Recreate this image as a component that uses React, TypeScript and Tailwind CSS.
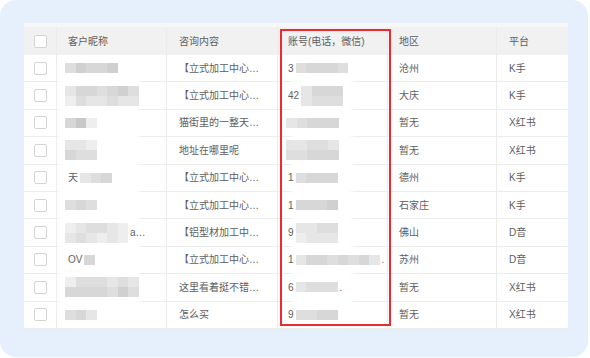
import { memo } from 'react';

type Row = {
    nick: { pre?: string; tiles: string[]; post?: string };
    content: string;
    account: { pre?: string; tiles: string[]; post?: string };
    region: string;
    platform: string;
};

// mosaic tile greys, keyed by letter so patterns stay short
const shade: Record<string, string> = {
    a: 'bg-[#eeeeee]',
    b: 'bg-[#e6e6e6]',
    c: 'bg-[#dedede]',
    d: 'bg-[#d7d7d7]',
    e: 'bg-[#d0d0d0]',
    f: 'bg-[#c8c8c8]',
};

const rows: Row[] = [
    { nick: { tiles: ['cedde'] }, content: '【立式加工中心…', account: { pre: '3', tiles: ['cdddc'] }, region: '沧州', platform: 'K手' },
    { nick: { tiles: ['bddcdec', 'acbbcbb'] }, content: '【立式加工中心…', account: { pre: '42', tiles: ['bddd', 'bccc'] }, region: '大庆', platform: 'K手' },
    { nick: { tiles: ['dfa'] }, content: '猫街里的一整天…', account: { tiles: ['bcddd'] }, region: '暂无', platform: 'X红书' },
    { nick: { tiles: ['bba', 'dcc'] }, content: '地址在哪里呢', account: { tiles: ['bbccb', 'ccddd'] }, region: '暂无', platform: 'X红书' },
    { nick: { pre: '天', tiles: ['bcd'] }, content: '【立式加工中心…', account: { pre: '1', tiles: ['cddd'] }, region: '德州', platform: 'K手' },
    { nick: { tiles: ['cdc'] }, content: '【立式加工中心…', account: { pre: '1', tiles: ['ddde'] }, region: '石家庄', platform: 'K手' },
    { nick: { tiles: ['abccba', 'bcbaba'], post: 'a…' }, content: '【铝型材加工中…', account: { pre: '9', tiles: ['bbcc', 'abbb'] }, region: '佛山', platform: 'D音' },
    { nick: { pre: 'OV', tiles: ['d'] }, content: '【立式加工中心…', account: { pre: '1', tiles: ['bddcdcdb'], post: '.' }, region: '苏州', platform: 'D音' },
    { nick: { tiles: ['acccbcb', 'ddddcec'] }, content: '这里看着挺不错…', account: { pre: '6', tiles: ['bccc'], post: '.' }, region: '暂无', platform: 'X红书' },
    { nick: { tiles: ['cdb'] }, content: '怎么买', account: { pre: '9', tiles: ['ccdd'] }, region: '暂无', platform: 'X红书' },
];

const cols = 'grid grid-cols-[33px_110px_111px_110px_109px_71px]';

const Checkbox = () => (
    <span className="block w-[13px] h-[13px] rounded-[2px] border border-[#d4d4d4] bg-white" />
);

const Mosaic = ({ tiles }: { tiles: string[] }) => (
    <span className="flex flex-col blur-[0.4px]">
        {tiles.map((line, i) => (
            <span key={i} className="flex">
                {line.split('').map((k, j) => (
                    <span key={j} className={`block w-[10.5px] h-[10px] ${shade[k]}`} />
                ))}
            </span>
        ))}
    </span>
);

const Blurred = ({ pre, tiles, post }: Row['nick']) => (
    <span className="relative z-20 flex items-center">
        {pre && <span className="mr-[2px]">{pre}</span>}
        <Mosaic tiles={tiles} />
        {post && <span className="ml-[2px]">{post}</span>}
    </span>
);

const Cell = ({ children, className = '' }: { children?: React.ReactNode; className?: string }) => (
    <div className={`flex items-center border-r border-[#ececec] last:border-r-0 ${className}`}>{children}</div>
);

const headers = ['客户昵称', '咨询内容', '账号(电话，微信)', '地区', '平台'];
const headPad = ['pl-[11px]', 'pl-[12px]', 'pl-[10px]', 'pl-[11px]', 'pl-[12px]'];

export const App = memo(() => (
    <div className="w-[590px] h-[358px] bg-white">
        <div
            className="w-[588px] h-[357px] rounded-[16px] bg-[#e6f0fd] pt-[23px] pl-[24px] text-[10px] text-[#5e5e5e]"
            style={{ fontFamily: '"Liberation Sans", "Noto Sans CJK SC", sans-serif' }}
        >
            <div className="relative w-[544px] bg-white">
                {/* header */}
                <div className="bg-[#f7f7f7] pt-[4px]">
                    <div className={`${cols} h-[28px] bg-[#f1f1f1]`}>
                        <Cell className="justify-center border-[#e6e6e6]">
                            <Checkbox />
                        </Cell>
                        {headers.map((h, i) => (
                            <Cell key={h} className={`${headPad[i]} border-[#e6e6e6]`}>
                                {h}
                            </Cell>
                        ))}
                    </div>
                </div>

                {/* body */}
                {rows.map((r, i) => (
                    <div key={i} className={`${cols} h-[27.4px] border-b border-[#ececec]`}>
                        <Cell className="justify-center">
                            <Checkbox />
                        </Cell>
                        <Cell className={r.nick.pre ? 'pl-[11px]' : 'pl-[8px]'}>
                            <Blurred {...r.nick} />
                        </Cell>
                        <Cell className="pl-[12px]">{r.content}</Cell>
                        <Cell className={r.account.pre ? 'pl-[10px]' : 'pl-[8px]'}>
                            <Blurred {...r.account} />
                        </Cell>
                        <Cell className="pl-[11px]">{r.region}</Cell>
                        <Cell className="pl-[12px]">{r.platform}</Cell>
                    </div>
                ))}

                {/* brush smudges over the masked columns */}
                <div className="absolute z-10 left-[35px] top-[34px] w-[80px] h-[268px] rounded-[14px] bg-white blur-[2px]" />
                <div className="absolute z-10 left-[268px] top-[34px] w-[60px] h-[268px] rounded-[10px] bg-white blur-[2px]" />

                {/* highlight frame around the account column */}
                <div className="absolute z-30 left-[256px] top-[6px] w-[111px] h-[297px] border-2 border-[#ee2a2e]" />
            </div>
        </div>
    </div>
));

App.displayName = 'App';

export default App;
